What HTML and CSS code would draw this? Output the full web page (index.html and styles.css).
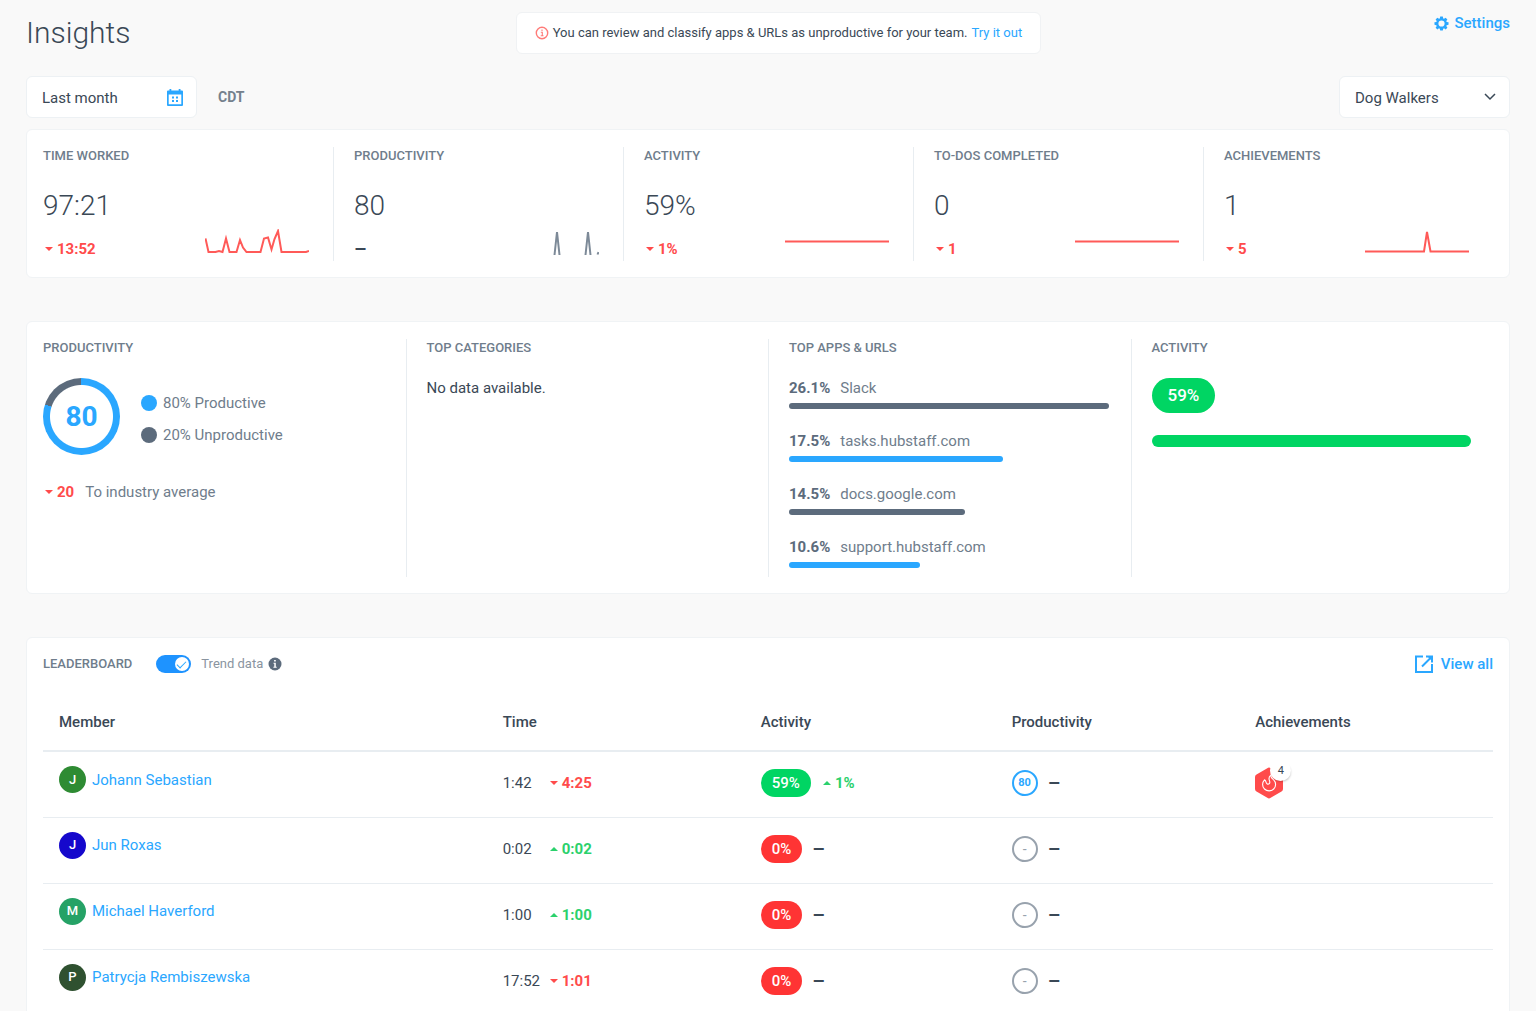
FILE: index.html
```html
<!DOCTYPE html>
<html lang="en">
<head>
<meta charset="utf-8">
<meta name="viewport" content="width=device-width, initial-scale=1">
<title>Insights</title>
<link rel="stylesheet" href="styles.css">
</head>
<body>
<header class="header">
  <h1 class="title">Insights</h1>
  <p class="notice">
    <svg class="notice-icon" viewBox="0 0 14 14" width="14" height="14" fill="none" stroke="currentColor" aria-hidden="true"><circle cx="7" cy="7" r="5.7" stroke-width="1.4"/><path d="M5.8 6.200h1.500v3.600M5.700 9.800h2.800" stroke-width="1.100"/><circle cx="7" cy="4.200" r=".5" stroke-width=".7"/></svg>
    <span>You can review and classify apps &amp; URLs as unproductive for your team.</span>
    <a href="#classify">Try it out</a>
  </p>
  <a class="settings" href="#settings">
    <svg viewBox="0 0 16 16" width="15" height="15" aria-hidden="true"><path fill="currentColor" fill-rule="evenodd" d="M6.600.6h2.800l.4 2 .9.4 1.700-1.200 1.900 1.900-1.200 1.700.4.9 2 .4v2.700l-2 .4-.4.9 1.200 1.700-1.900 1.900-1.700-1.200-.9.4-.4 2H6.600l-.4-2-.9-.4-1.700 1.200-1.900-1.900 1.200-1.700-.4-.9-2-.4V6.700l2-.4.4-.9-1.200-1.700 1.900-1.900 1.700 1.200.9-.4zM8 4.700a3.300 3.300 0 1 0 0 6.600 3.300 3.300 0 0 0 0-6.600z"/></svg>
    <span>Settings</span>
  </a>
</header>

<main>
  <div class="filters">
    <button class="field date" type="button">
      <span>Last month</span>
      <svg viewBox="0 0 16 18" width="16" height="18" fill="currentColor" aria-hidden="true"><path fill-rule="evenodd" d="M2.500 0h1.800v1.500h7.400V0h1.800v1.500H15a1 1 0 0 1 1 1V16a1 1 0 0 1-1 1H1a1 1 0 0 1-1-1V2.500a1 1 0 0 1 1-1h1.500zM1.700 5.500v9.800h12.600V5.500z"/><path d="M5 7.500h2v2H5zM9 7.500h2v2H9zM5 11h2v2H5zM9 11h2v2H9z"/></svg>
    </button>
    <span class="zone">CDT</span>
    <div class="team">
      <select class="field" aria-label="Team"><option>Dog Walkers</option></select>
      <svg viewBox="0 0 12 8" width="12" height="8" fill="none" stroke="currentColor" stroke-width="1.500" aria-hidden="true"><path d="M1 1l5 5 5-5"/></svg>
    </div>
  </div>

  <section class="card stats" aria-label="Summary">
    <article class="stat">
      <h2 class="label">Time worked</h2>
      <p class="value">97:21</p>
      <div class="stat-foot">
        <span class="delta down">13:52</span>
        <svg class="spark red" viewBox="0 0 104 28" width="104" height="28" aria-hidden="true"><path d="M.5 9.500L3.500 23h7l3.500-1 3.500 1 3.500-13.500L24.500 23h7L35 11l3 7.500 3.500 4.500h14L59 9.500l4-1 3.500 12 3-10.500L73 2l3.500 21H101l3-1"/></svg>
      </div>
    </article>
    <article class="stat">
      <h2 class="label">Productivity</h2>
      <p class="value">80</p>
      <div class="stat-foot">
        <span class="flat">–</span>
        <svg class="spark gray" viewBox="0 0 104 28" width="104" height="28" aria-hidden="true"><path d="M59.500 26L62 3l2.500 23M90.500 26L93 3l2.500 23M102.500 25.500l1-2.500"/></svg>
      </div>
    </article>
    <article class="stat">
      <h2 class="label">Activity</h2>
      <p class="value">59%</p>
      <div class="stat-foot">
        <span class="delta down">1%</span>
        <svg class="spark red" viewBox="0 0 104 28" width="104" height="28" aria-hidden="true"><path d="M0 12.500h104"/></svg>
      </div>
    </article>
    <article class="stat">
      <h2 class="label">To-dos completed</h2>
      <p class="value">0</p>
      <div class="stat-foot">
        <span class="delta down">1</span>
        <svg class="spark red" viewBox="0 0 104 28" width="104" height="28" aria-hidden="true"><path d="M0 12.500h104"/></svg>
      </div>
    </article>
    <article class="stat">
      <h2 class="label">Achievements</h2>
      <p class="value">1</p>
      <div class="stat-foot">
        <span class="delta down">5</span>
        <svg class="spark red" viewBox="0 0 104 28" width="104" height="28" aria-hidden="true"><path d="M0 22.500h59L62 3l3.500 19.500H104"/></svg>
      </div>
    </article>
  </section>

  <section class="card details" aria-label="Details">
    <article class="panel">
      <h2 class="label">Productivity</h2>
      <div class="score">
        <div class="donut"><span>80</span></div>
        <ul class="legend">
          <li>80% Productive</li>
          <li class="un">20% Unproductive</li>
        </ul>
      </div>
      <p class="compare"><span class="delta down">20</span><span>To industry average</span></p>
    </article>
    <article class="panel">
      <h2 class="label">Top categories</h2>
      <p class="empty">No data available.</p>
    </article>
    <article class="panel">
      <h2 class="label">Top apps &amp; URLs</h2>
      <ul class="apps">
        <li><b>26.1%</b>Slack<div class="bar slate" style="width:100%"></div></li>
        <li><b>17.5%</b>tasks.hubstaff.com<div class="bar" style="width:67%"></div></li>
        <li><b>14.5%</b>docs.google.com<div class="bar slate" style="width:55%"></div></li>
        <li><b>10.6%</b>support.hubstaff.com<div class="bar" style="width:41%"></div></li>
      </ul>
    </article>
    <article class="panel">
      <h2 class="label">Activity</h2>
      <span class="pill large">59%</span>
      <div class="meter"></div>
    </article>
  </section>

  <section class="card board" aria-label="Leaderboard">
    <div class="board-head">
      <h2 class="label">Leaderboard</h2>
      <label class="trend"><input class="switch" type="checkbox" checked><span>Trend data</span></label>
      <svg class="info" viewBox="0 0 14 14" width="14" height="14" aria-hidden="true"><circle cx="7" cy="7" r="6.500" fill="currentColor"/><path d="M5.500 5.700h2.300v4h.9v1H5.400v-1h.9v-3h-.8zM6.100 2.900h1.700v1.600H6.100z" fill="#fff"/></svg>
      <a class="view-all" href="#leaderboard">
        <svg viewBox="0 0 18 18" width="18" height="18" fill="none" stroke="currentColor" stroke-width="2" aria-hidden="true"><path d="M8 1.500H1v15.500h16V9M11 1.500h6v6M16.500 2L7 11.500"/><path d="M12 1h5.500v5.500z" fill="currentColor" stroke="none"/></svg>
        <span>View all</span>
      </a>
    </div>
    <table class="table">
      <thead>
        <tr><th class="c-member">Member</th><th class="c-time">Time</th><th class="c-activity">Activity</th><th class="c-prod">Productivity</th><th>Achievements</th></tr>
      </thead>
      <tbody>
        <tr>
          <td class="member"><div class="who"><span class="avatar green">J</span><a href="#johann">Johann Sebastian</a></div></td>
          <td><div class="cell"><span class="time">1:42</span><span class="delta down">4:25</span></div></td>
          <td><div class="cell"><span class="pill">59%</span><span class="delta up">1%</span></div></td>
          <td><div class="cell"><span class="ring on">80</span><span class="flat">–</span></div></td>
          <td>
            <div class="badge">
              <svg viewBox="0 0 28 32" width="28" height="32" aria-hidden="true"><path fill="#ff4b4b" d="M12.300 1.200a3 3 0 0 1 3.400 0l10.800 6.200A3 3 0 0 1 28 10v12a3 3 0 0 1-1.500 2.600l-10.800 6.200a3 3 0 0 1-3.400 0L1.500 24.600A3 3 0 0 1 0 22V10a3 3 0 0 1 1.500-2.600z"/><path fill="none" stroke="#fff" stroke-width="1.100" stroke-linejoin="round" d="M9.500 12.800a6.500 6.500 0 1 0 9.200 0c-1.500-1.400-3.200-2.300-2.900-4.700-1.400 1-2.400 3-1.200 6 .8 2-.8 3.600-2.400 2.800-1.700-.9-.6-2.900-2.700-4.100z"/></svg>
              <span class="count">4</span>
            </div>
          </td>
        </tr>
        <tr>
          <td class="member"><div class="who"><span class="avatar blue">J</span><a href="#jun">Jun Roxas</a></div></td>
          <td><div class="cell"><span class="time">0:02</span><span class="delta up">0:02</span></div></td>
          <td><div class="cell"><span class="pill low">0%</span><span class="flat">–</span></div></td>
          <td><div class="cell"><span class="ring">-</span><span class="flat">–</span></div></td>
          <td></td>
        </tr>
        <tr>
          <td class="member"><div class="who"><span class="avatar teal">M</span><a href="#michael">Michael Haverford</a></div></td>
          <td><div class="cell"><span class="time">1:00</span><span class="delta up">1:00</span></div></td>
          <td><div class="cell"><span class="pill low">0%</span><span class="flat">–</span></div></td>
          <td><div class="cell"><span class="ring">-</span><span class="flat">–</span></div></td>
          <td></td>
        </tr>
        <tr>
          <td class="member"><div class="who"><span class="avatar forest">P</span><a href="#patrycja">Patrycja Rembiszewska</a></div></td>
          <td><div class="cell"><span class="time">17:52</span><span class="delta down">1:01</span></div></td>
          <td><div class="cell"><span class="pill low">0%</span><span class="flat">–</span></div></td>
          <td><div class="cell"><span class="ring">-</span><span class="flat">–</span></div></td>
          <td></td>
        </tr>
      </tbody>
    </table>
  </section>
</main>
</body>
</html>
```

FILE: styles.css
```css
:root {
  --blue: #2aa7ff;
  --red: #ff4b4b;
  --green: #00d563;
  --slate: #5c6b7c;
  --ink: #3a4856;
  --muted: #6f7d8c;
  --line: #e8edf1;
}

* { box-sizing: border-box; }

body {
  margin: 0;
  padding: 12px 26px 16px;
  background: #f9f9f9;
  color: var(--ink);
  font: 15px/20px Roboto, "Liberation Sans", sans-serif;
}

h1, h2, p, ul { margin: 0; padding: 0; }
ul { list-style: none; }
a { color: var(--blue); text-decoration: none; }
svg { flex: none; }

/* Header */
.header {
  display: flex;
  justify-content: space-between;
  align-items: flex-start;
}
.title {
  font-size: 30px;
  line-height: 42px;
  font-weight: 300;
}
.notice {
  display: flex;
  align-items: center;
  gap: 4px;
  padding: 10px 18px;
  border: 1px solid #f0f2f4;
  border-radius: 6px;
  background: #fff;
  font-size: 13px;
}
.notice-icon { color: #ff7b78; }
.settings {
  display: flex;
  align-items: center;
  gap: 5px;
  padding: 1px 0 0 8px;
  font-weight: 500;
}

/* Filters */
.filters {
  display: flex;
  align-items: center;
  margin: 22px 0 11px;
}
.field {
  width: 171px;
  height: 42px;
  padding: 2px 13px 0 15px;
  border: 1px solid #edf1f4;
  border-radius: 6px;
  background: #fff;
  color: var(--ink);
  font: inherit;
  appearance: none;
}
.date {
  display: flex;
  align-items: center;
  justify-content: space-between;
}
.date svg { color: var(--blue); }
.zone {
  margin-left: 21px;
  color: #75818d;
  font-size: 14px;
  font-weight: 700;
}
.team {
  display: grid;
  align-items: center;
  margin-left: auto;
}
.team > * { grid-area: 1 / 1; }
.team svg {
  justify-self: end;
  margin-right: 14px;
  pointer-events: none;
}

/* Cards */
.card {
  padding: 17px 16px 16px;
  border: 1px solid #f0f3f5;
  border-radius: 6px;
  background: #fff;
}
.label {
  color: var(--muted);
  font-size: 13px;
  line-height: 18px;
  font-weight: 500;
  text-transform: uppercase;
}

/* Trend values */
.delta {
  display: inline-flex;
  align-items: center;
  gap: 4px;
  font-weight: 700;
}
.delta::before {
  content: "";
  margin-left: 2px;
  border: 4px solid transparent;
}
.down { color: var(--red); }
.down::before { border-top-color: currentColor; border-bottom-width: 0; }
.up { color: #2bd16c; }
.up::before { border-bottom-color: currentColor; border-top-width: 0; }
.flat { font-size: 20px; font-weight: 500; }

/* Summary */
.stats {
  display: grid;
  grid-template-columns: repeat(5, 1fr);
}
.stat { padding-right: 24px; }
.stat + .stat {
  padding-left: 20px;
  border-left: 1px solid var(--line);
}
.value {
  margin-top: 24px;
  font-size: 28px;
  line-height: 34px;
  font-weight: 300;
}
.stat-foot {
  display: flex;
  align-items: flex-end;
  justify-content: space-between;
  margin-top: 6px;
  height: 32px;
  padding-bottom: 2px;
}
.spark { fill: none; stroke-width: 2; margin-bottom: 2px; }
.spark.red { stroke: #ff5a58; }
.spark.gray { stroke: #7d8a98; }

/* Details */
.details {
  display: grid;
  grid-template-columns: repeat(4, 1fr);
  margin-top: 43px;
}
.panel {
  min-height: 238px;
  padding-right: 22px;
}
.panel + .panel {
  padding-left: 20px;
  border-left: 1px solid var(--line);
}
.score {
  display: flex;
  align-items: center;
  gap: 21px;
  margin-top: 21px;
}
.donut {
  display: grid;
  place-items: center;
  width: 77px;
  height: 77px;
  border-radius: 50%;
  background:
    radial-gradient(circle closest-side, #fff 31px, transparent 32px),
    conic-gradient(var(--blue) 80%, var(--slate) 0);
  color: var(--blue);
  font-size: 28px;
  font-weight: 700;
}
.legend {
  display: grid;
  gap: 12px;
  padding-top: 4px;
  color: var(--muted);
}
.legend li {
  display: flex;
  align-items: center;
  gap: 6px;
}
.legend li::before {
  content: "";
  width: 16px;
  height: 16px;
  border-radius: 50%;
  background: var(--blue);
}
.legend .un::before { background: var(--slate); }
.compare {
  display: flex;
  gap: 11px;
  margin-top: 27px;
  color: var(--muted);
}
.empty { margin-top: 21px; }
.apps {
  display: grid;
  gap: 22px;
  margin-top: 21px;
  color: var(--muted);
}
.apps b {
  margin-right: 10px;
  color: var(--slate);
}
.bar {
  height: 6px;
  margin-top: 5px;
  border-radius: 3px;
  background: var(--blue);
}
.slate { background: var(--slate); }
.pill {
  display: inline-block;
  padding: 0 11px;
  border-radius: 18px;
  background: var(--green);
  color: #fff;
  font-weight: 500;
  line-height: 28px;
}
.pill.low { background: #ff3434; }
.pill.large {
  margin-top: 21px;
  padding: 0 16px;
  font-size: 17px;
  line-height: 35px;
}
.meter {
  height: 12px;
  margin-top: 22px;
  border-radius: 6px;
  background: var(--green);
}

/* Leaderboard */
.board {
  margin-top: 43px;
  padding-top: 16px;
}
.board-head {
  display: flex;
  align-items: center;
}
.trend {
  display: flex;
  align-items: center;
  gap: 10px;
  margin: 0 5px 0 24px;
  color: #8a949f;
  font-size: 13px;
}
.switch {
  display: grid;
  align-items: center;
  width: 35px;
  height: 18px;
  margin: 0;
  padding: 0 2px;
  border-radius: 9px;
  background: #aab4bf;
  appearance: none;
}
.switch::before,
.switch::after {
  content: "";
  grid-area: 1 / 1;
}
.switch::before {
  width: 14px;
  height: 14px;
  border-radius: 50%;
  background: #fff;
}
.switch:checked { background: #1e93ff; }
.switch:checked::before { justify-self: end; }
.switch:checked::after {
  justify-self: end;
  width: 8px;
  height: 4px;
  margin: 0 3px 2px 0;
  border: solid var(--blue);
  border-width: 0 0 1px 1px;
  transform: rotate(-45deg);
}
.info { color: var(--slate); }
.view-all {
  display: flex;
  align-items: center;
  gap: 8px;
  margin-left: auto;
  font-weight: 500;
}
.table {
  width: 100%;
  margin-top: 20px;
  border-collapse: collapse;
  table-layout: fixed;
}
.table th {
  height: 57px;
  padding: 0 16px;
  border-bottom: 2px solid var(--line);
  font-weight: 500;
  text-align: left;
}
.c-member { width: 30.6%; }
.c-time { width: 17.8%; }
.c-activity { width: 17.3%; }
.c-prod { width: 16.8%; }
.table td {
  height: 66px;
  padding: 0 16px 2px;
  border-bottom: 1px solid var(--line);
}
.table .member {
  padding-top: 14px;
  vertical-align: top;
}
.who {
  display: flex;
  align-items: center;
  gap: 6px;
}
.avatar {
  display: grid;
  place-items: center;
  width: 27px;
  height: 27px;
  border-radius: 50%;
  color: #fff;
  font-size: 13px;
  font-weight: 500;
}
.green { background: #2e8b33; }
.blue { background: #1508cc; }
.teal { background: #25a266; }
.forest { background: #2f5130; }
.cell {
  display: flex;
  align-items: center;
  gap: 10px;
}
.time { width: 35px; }
.ring {
  display: grid;
  place-items: center;
  width: 26px;
  height: 26px;
  border: 2px solid #98a2ad;
  border-radius: 50%;
  color: #98a2ad;
  font-size: 14px;
}
.ring.on {
  border-color: var(--blue);
  color: var(--blue);
  font-size: 11px;
  font-weight: 700;
}
.badge {
  position: relative;
  width: 28px;
  height: 32px;
}
.count {
  position: absolute;
  top: -7px;
  left: 15px;
  width: 21px;
  height: 21px;
  border-radius: 50%;
  background: #fff;
  box-shadow: 1px 2px 2px -1px #0003;
  font-size: 11px;
  line-height: 21px;
  text-align: center;
}
```
